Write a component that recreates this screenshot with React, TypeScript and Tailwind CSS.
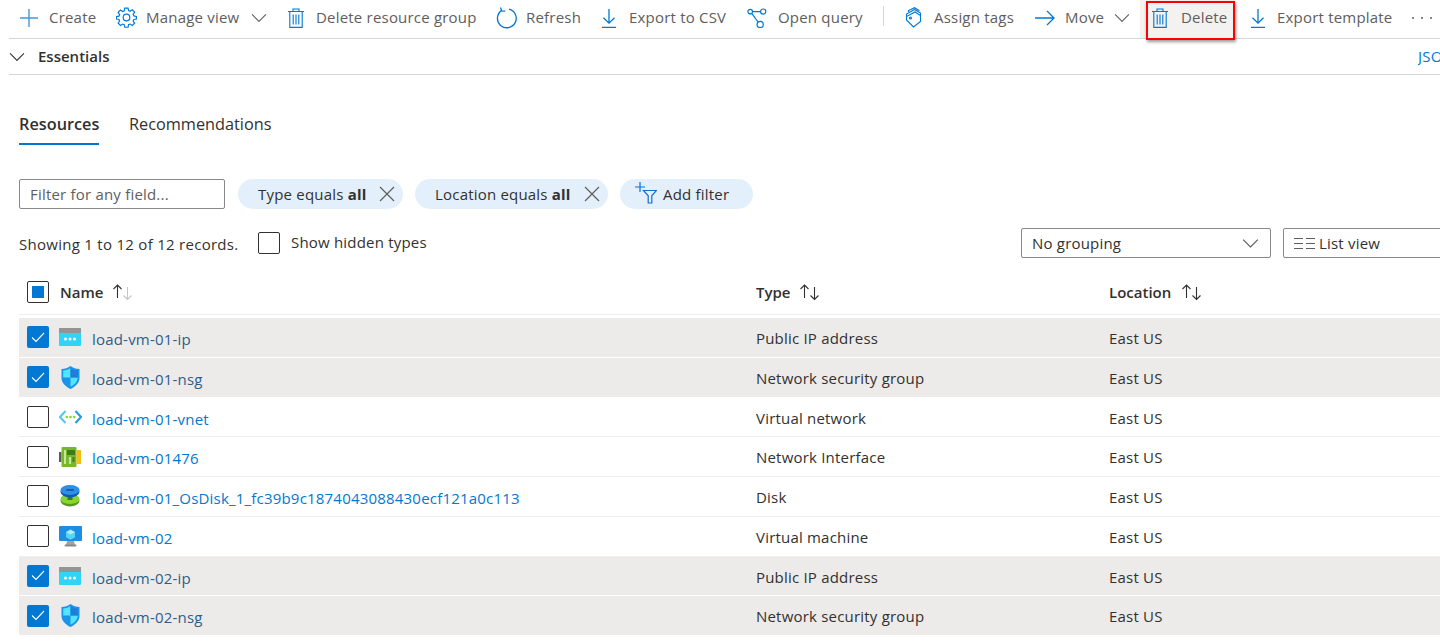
import React from "react";

const font = "font-['Open_Sans','Noto_Sans',sans-serif]";

function Plus() {
  return <svg width="20" height="20" viewBox="0 0 20 20" fill="none" stroke="#3f9ae0" strokeWidth="1.4"><path d="M10 1v18M1 10h18" /></svg>;
}
function Gear() {
  return (
    <svg width="21" height="21" viewBox="0 0 21 21" fill="none" stroke="#0078d4" strokeWidth="1.2">
      <path d="M8.8 1.2h3.4l.5 2.6 1.6.7 2.2-1.5 2.4 2.4-1.5 2.2.7 1.6 2.6.5v2.6l-2.6.5-.7 1.6 1.5 2.2-2.4 2.4-2.2-1.5-1.6.7-.5 2.6H8.8l-.5-2.6-1.6-.7-2.2 1.5-2.4-2.4 1.5-2.2-.7-1.6-2.6-.5V9.9l2.6-.5.7-1.6-1.5-2.2 2.4-2.4 2.2 1.5 1.6-.7z" transform="translate(.1 -.1) scale(.98)" />
      <circle cx="10.5" cy="10.5" r="3.3" />
    </svg>
  );
}
function Trash({ color = "#0078d4" }: { color?: string }) {
  return (
    <svg width="16" height="20" viewBox="0 0 16 20" fill="none" stroke={color} strokeWidth="1.1">
      <path d="M0 3.5h16M5 3.5V1h6v2.5M1.8 3.5v15.9h12.4V3.5M5.2 6.500v10M8 6.500v10M10.800 6.500v10" />
    </svg>
  );
}
function Refresh() {
  return (
    <svg width="21" height="22" viewBox="0 0 21 22" fill="none" stroke="#0078d4" strokeWidth="1.3">
      <path d="M5.5 3.6A9.4 9.4 0 1 0 13 2.2" />
      <path d="M4.5 0.5l1.2 3.4 3.5.2" />
    </svg>
  );
}
function Download() {
  return (
    <svg width="16" height="20" viewBox="0 0 16 20" fill="none" stroke="#0078d4" strokeWidth="1.3">
      <path d="M8 1v14M2.5 9.8L8 15.2l5.5-5.4M1 19.3h14" />
    </svg>
  );
}
function Query() {
  return (
    <svg width="20" height="20" viewBox="0 0 20 20" fill="none" stroke="#0078d4" strokeWidth="1.2">
      <circle cx="3.2" cy="3.6" r="2.3" />
      <circle cx="16.2" cy="3.6" r="2.6" />
      <circle cx="13.2" cy="16.4" r="3.1" />
      <path d="M5.5 3.6h8M4.8 5.4l6.2 8.6" />
    </svg>
  );
}
function Tags() {
  return (
    <svg width="17" height="21" viewBox="0 0 17 21" fill="none" stroke="#0078d4" strokeWidth="1.1">
      <path d="M1.500 9.500v3.500l7 7 7-5.500V8.500l-5.500-3.500z" />
      <path d="M1.500 9.500V7l8-4.500 6 3.500v2.500M3.500 5V3.500L9.500.7l5 3" />
      <circle cx="5.500" cy="11" r="1" />
    </svg>
  );
}
function Arrow() {
  return (
    <svg width="20" height="16" viewBox="0 0 20 16" fill="none" stroke="#0078d4" strokeWidth="1.3">
      <path d="M0 8h19M12 1l7 7-7 7" />
    </svg>
  );
}
function Chevron({ w = 16, color = "#605e5c" }: { w?: number; color?: string }) {
  return (
    <svg width={w} height={w * 0.62} viewBox="0 0 16 10" fill="none" stroke={color} strokeWidth="1.1">
      <path d="M1 1.5l7 7 7-7" />
    </svg>
  );
}
function Cross() {
  return <svg width="16" height="16" viewBox="0 0 16 16" fill="none" stroke="#605e5c" strokeWidth="1.2"><path d="M1 1l14 14M15 1L1 15" /></svg>;
}
function AddFilter() {
  return (
    <svg width="23" height="22" viewBox="0 0 23 22" fill="none" stroke="#0f6cdb" strokeWidth="1.2">
      <path d="M6 0v10M1 5h10" />
      <path d="M9.5 8.5h13l-4.700 5.300v7.200h-3.600v-7.200z" />
    </svg>
  );
}
function Sort({ upDark = true, downDark = true }: { upDark?: boolean; downDark?: boolean }) {
  return (
    <svg width="22" height="17" viewBox="0 0 22 17" fill="none" strokeWidth="1.1">
      <path d="M5.500 14V1.500M1.500 5l4-4 4 4" stroke={upDark ? "#323130" : "#c8c6c4"} />
      <path d="M15.500 3v12.500M11.500 11.500l4 4 4-4" stroke={downDark ? "#323130" : "#c8c6c4"} />
    </svg>
  );
}
function Info() {
  return (
    <svg width="15" height="15" viewBox="0 0 15 15" fill="none" stroke="#605e5c" strokeWidth="1">
      <circle cx="7.500" cy="7.500" r="6.800" />
      <path d="M7.500 6.500v4.600M7.500 3.800v1.300" />
    </svg>
  );
}
function ListIcon() {
  return (
    <svg width="21" height="13" viewBox="0 0 21 13" fill="none" stroke="#605e5c" strokeWidth="1">
      <path d="M0 1.500h9M0 6.500h9M0 11.500h9M12 1.500h9M12 6.500h9M12 11.500h9" />
    </svg>
  );
}

function IpIcon() {
  return (
    <svg width="22" height="18" viewBox="0 0 22 18">
      <rect x="0" y="0" width="22" height="18" rx="1" fill="#32d4f5" />
      <rect x="0" y="0" width="22" height="5" rx="1" fill="#949494" />
      <circle cx="6.500" cy="11" r="1.500" fill="#fff" />
      <circle cx="11" cy="11" r="1.500" fill="#fff" />
      <circle cx="15.500" cy="11" r="1.500" fill="#fff" />
    </svg>
  );
}
function ShieldIcon() {
  return (
    <svg width="19" height="23" viewBox="0 0 19 23">
      <path d="M9.500 0C12 2 15 3 18.500 3v9c0 5.500-5 9-9 11-4-2-9-5.500-9-11V3C4 3 7 2 9.500 0z" fill="#1b93eb" />
      <path d="M9.500 2v9.500H2.200V4.500C5 4.500 7.500 3.500 9.500 2z" fill="#50e6ff" />
      <path d="M9.500 11.500h7.300c-.2 4.500-4 7.500-7.300 9.200z" fill="#50e6ff" />
      <path d="M9.500 2c2 1.500 4.500 2.500 7.300 2.500v7H9.500z" fill="#1f7fd6" />
    </svg>
  );
}
function VnetIcon() {
  return (
    <svg width="23" height="14" viewBox="0 0 23 14" fill="none">
      <path d="M6.500 1L1 7l5.500 6" stroke="#50c8f0" strokeWidth="2" />
      <path d="M16.500 1L22 7l-5.500 6" stroke="#1f9be8" strokeWidth="2" />
      <circle cx="7.800" cy="7" r="1.300" fill="#86d633" />
      <circle cx="11.500" cy="7" r="1.300" fill="#86d633" />
      <circle cx="15.200" cy="7" r="1.300" fill="#86d633" />
    </svg>
  );
}
function NicIcon() {
  return (
    <svg width="22" height="20" viewBox="0 0 22 20">
      <rect x="0" y="5" width="2.500" height="10" fill="#5b5b5b" />
      <rect x="2.500" y="0" width="15" height="20" rx="1" fill="#76b82a" />
      <rect x="17.500" y="3" width="4.500" height="14" fill="#f2c10f" />
      <rect x="8" y="3" width="8" height="5" fill="#3f7d1c" />
      <rect x="5" y="3" width="2" height="14" fill="#c7e59e" />
      <rect x="10" y="10" width="2" height="7" fill="#c7e59e" />
      <rect x="13.500" y="10" width="2" height="5" fill="#3f7d1c" />
    </svg>
  );
}
function DiskIcon() {
  return (
    <svg width="20" height="22" viewBox="0 0 20 22">
      <ellipse cx="10" cy="15.500" rx="9.500" ry="6" fill="#5e9624" />
      <ellipse cx="10" cy="14" rx="9.500" ry="5" fill="#86d633" />
      <rect x="7.500" y="5" width="5" height="10" fill="#3c7a1a" />
      <ellipse cx="10" cy="6.500" rx="9.500" ry="6" fill="#0a5cb0" />
      <ellipse cx="10" cy="5" rx="9.500" ry="5" fill="#2f8fe8" />
      <rect x="6" y="4.300" width="8" height="1.400" rx=".7" fill="#0f4f8f" />
    </svg>
  );
}
function VmIcon() {
  return (
    <svg width="23" height="21" viewBox="0 0 23 21">
      <rect x="0" y="0" width="23" height="15" rx="1" fill="#1c8ee6" />
      <path d="M8 15h7l1 4H7z" fill="#a3a3a3" />
      <rect x="5.500" y="18.500" width="12" height="2" rx="1" fill="#8a8a8a" />
      <path d="M11.500 3.500l4.500 2.500v5l-4.500 2.500L7 11V6z" fill="#b4ecfa" />
      <path d="M7 6l4.500 2.500L16 6v5l-4.500 2.500L7 11z" fill="#50d8fa" />
    </svg>
  );
}

function Box({ checked = false }: { checked?: boolean }) {
  return checked ? (
    <div className="flex h-[22px] w-[22px] shrink-0 items-center justify-center rounded-[2px] bg-[#0078d4]">
      <svg width="14" height="11" viewBox="0 0 14 11" fill="none" stroke="#fff" strokeWidth="1.1"><path d="M1 5.500l4 4 8-8.500" /></svg>
    </div>
  ) : (
    <div className="h-[22px] w-[22px] shrink-0 rounded-[2px] border border-[#323130] bg-white" />
  );
}

function Tool({ w, ml, icon, iw, label, after }: { w: number; ml: number; icon: React.ReactNode; iw: number; label: string; after?: React.ReactNode }) {
  return (
    <div className="flex h-[35px] shrink-0 items-center whitespace-nowrap" style={{ width: w, marginLeft: ml }}>
      <div className="flex shrink-0 items-center" style={{ width: iw }}>{icon}</div>
      <span>{label}</span>
      {after}
    </div>
  );
}

type Row = { name: string; type: string; icon: React.ReactNode; sel: boolean };
const rows: Row[] = [
  { name: "load-vm-01-ip", type: "Public IP address", icon: <IpIcon />, sel: true },
  { name: "load-vm-01-nsg", type: "Network security group", icon: <ShieldIcon />, sel: true },
  { name: "load-vm-01-vnet", type: "Virtual network", icon: <VnetIcon />, sel: false },
  { name: "load-vm-01476", type: "Network Interface", icon: <NicIcon />, sel: false },
  { name: "load-vm-01_OsDisk_1_fc39b9c1874043088430ecf121a0c113", type: "Disk", icon: <DiskIcon />, sel: false },
  { name: "load-vm-02", type: "Virtual machine", icon: <VmIcon />, sel: false },
  { name: "load-vm-02-ip", type: "Public IP address", icon: <IpIcon />, sel: true },
  { name: "load-vm-02-nsg", type: "Network security group", icon: <ShieldIcon />, sel: true },
];

export default function App() {
  return (
    <div className={`${font} h-[643px] w-[1440px] overflow-hidden bg-white text-[15px] tracking-[0.2px] text-[#323130]`}>
      {/* Toolbar */}
      <div className="ml-[9px] flex h-[39px] items-start border-b border-[#d6d6d6] text-[#605e5c]">
        <Tool ml={10} w={97} iw={30} icon={<Plus />} label="Create" />
        <Tool ml={0} w={172} iw={30} icon={<Gear />} label="Manage view" after={<span className="ml-[12px]"><Chevron /></span>} />
        <Tool ml={0} w={208} iw={28} icon={<Trash />} label="Delete resource group" />
        <Tool ml={0} w={105} iw={30} icon={<Refresh />} label="Refresh" />
        <Tool ml={0} w={146} iw={28} icon={<Download />} label="Export to CSV" />
        <div className="relative shrink-0">
          <Tool ml={0} w={136} iw={31} icon={<Query />} label="Open query" />
          <div className="absolute left-[136px] top-[6px] h-[20px] w-px bg-[#d6d6d6]" />
        </div>
        <Tool ml={22} w={130} iw={29} icon={<Tags />} label="Assign tags" />
        <Tool ml={0} w={105} iw={30} icon={<Arrow />} label="Move" after={<span className="ml-[10px]"><Chevron /></span>} />
        <div className="relative flex h-[38px] w-[95px] shrink-0 items-center bg-[#f3f2f1] pb-[3px] pl-[12px]">
          <div className="w-[29px] shrink-0"><Trash /></div>
          <span>Delete</span>
          <div className="absolute left-[6px] top-[1px] h-[39px] w-[89px] border-2 border-[#ff0000] shadow-[1px_2px_3px_rgba(0,0,0,0.4)]" />
        </div>
        <Tool ml={15} w={162} iw={27} icon={<Download />} label="Export template" />
        <div className="flex h-[35px] w-[20px] shrink-0 items-center justify-between">
          <span className="h-[2px] w-[2px] rounded-full bg-[#605e5c]" />
          <span className="h-[2px] w-[2px] rounded-full bg-[#605e5c]" />
          <span className="h-[2px] w-[2px] rounded-full bg-[#605e5c]" />
        </div>
      </div>

      {/* Essentials */}
      <div className="ml-[9px] flex h-[36px] items-center justify-between border-b border-[#d6d6d6]">
        <div className="flex items-center">
          <Chevron color="#323130" />
          <span className="ml-[13px] font-semibold tracking-normal">Essentials</span>
        </div>
        <span className="w-[22px] overflow-hidden whitespace-nowrap text-[#0078d4]">JSON View</span>
      </div>

      {/* Tabs */}
      <div className="ml-[19px] mt-[33px] flex h-[37px] items-start gap-[30px] text-[16.3px] tracking-normal">
        <div className="h-[37px] w-[80px] whitespace-nowrap border-b-2 border-[#0078d4] pt-[4px] font-semibold">Resources</div>
        <div className="whitespace-nowrap pt-[4px]">Recommendations</div>
      </div>

      {/* Filters */}
      <div className="ml-[19px] mt-[34px] flex h-[30px] items-center">
        <div className="flex h-[30px] w-[206px] shrink-0 items-center rounded-[2px] border border-[#8a8886] pl-[10px] text-[#605e5c]">Filter for any field...</div>
        <div className="ml-[13px] flex h-[30px] w-[165px] shrink-0 items-center whitespace-nowrap rounded-full bg-[#e3f0fb] pl-[20px]">
          <span className="w-[121px]">Type equals <b className="font-bold">all</b></span>
          <Cross />
        </div>
        <div className="ml-[12px] flex h-[30px] w-[193px] shrink-0 items-center whitespace-nowrap rounded-full bg-[#e3f0fb] pl-[20px]">
          <span className="w-[149px]">Location equals <b className="font-bold">all</b></span>
          <Cross />
        </div>
        <div className="ml-[12px] flex h-[30px] w-[133px] shrink-0 items-center whitespace-nowrap rounded-full bg-[#e3f0fb] pl-[14px]">
          <span className="w-[29px] -translate-y-[1px]"><AddFilter /></span>
          <span>Add filter</span>
        </div>
      </div>

      {/* Records line */}
      <div className="ml-[19px] mt-[19px] flex h-[30px] items-center">
        <span className="w-[239px] shrink-0 translate-y-[1px] whitespace-nowrap tracking-[0.28px]">Showing 1 to 12 of 12 records.</span>
        <Box />
        <span className="ml-[11px] w-[148px] shrink-0 -translate-y-[1px] whitespace-nowrap">Show hidden types</span>
        <Info />
        <div className="ml-[582px] flex h-[30px] w-[250px] shrink-0 items-center justify-between rounded-[2px] border border-[#8a8886] pl-[10px] pr-[11px]">
          <span>No grouping</span>
          <Chevron w={17} />
        </div>
        <div className="ml-[12px] flex h-[30px] w-[200px] shrink-0 items-center rounded-[2px] border border-[#8a8886] pl-[10px]">
          <ListIcon />
          <span className="ml-[4px]">List view</span>
        </div>
      </div>

      {/* Header */}
      <div className="ml-[19px] mt-[12px] flex h-[45px] items-center border-b border-[#eeeeee] font-semibold tracking-normal">
        <div className="flex w-[737px] shrink-0 items-center pl-[8px]">
          <div className="flex h-[22px] w-[22px] items-center justify-center rounded-[2px] border border-[#323130]">
            <div className="h-[12px] w-[12px] bg-[#0078d4]" />
          </div>
          <span className="ml-[11px]">Name</span>
          <span className="ml-[9px]"><Sort downDark={false} /></span>
        </div>
        <div className="flex w-[353px] shrink-0 items-center">
          <span>Type</span>
          <span className="ml-[9px]"><Sort /></span>
        </div>
        <div className="flex items-center">
          <span>Location</span>
          <span className="ml-[10px]"><Sort /></span>
        </div>
      </div>

      {/* Rows */}
      <div className="ml-[19px] mt-[3px]">
        {rows.map((r) => (
          <div key={r.name} className={`flex h-[39.750px] items-center border-b ${r.sel ? "border-white bg-[#edebe9]" : "border-[#eeeeee] bg-white"}`}>
            <div className="flex w-[737px] shrink-0 items-center pl-[8px]">
              <Box checked={r.sel} />
              <div className="ml-[8px] flex w-[26px] shrink-0 justify-center">{r.icon}</div>
              <span className={`ml-[9px] translate-y-[1.5px] whitespace-nowrap ${r.sel ? "text-[#2b5e8c]" : "text-[#0078d4]"}`}>{r.name}</span>
            </div>
            <div className="w-[353px] shrink-0 translate-y-[0.5px] whitespace-nowrap">{r.type}</div>
            <div className="translate-y-[0.5px]">East US</div>
          </div>
        ))}
      </div>
    </div>
  );
}
